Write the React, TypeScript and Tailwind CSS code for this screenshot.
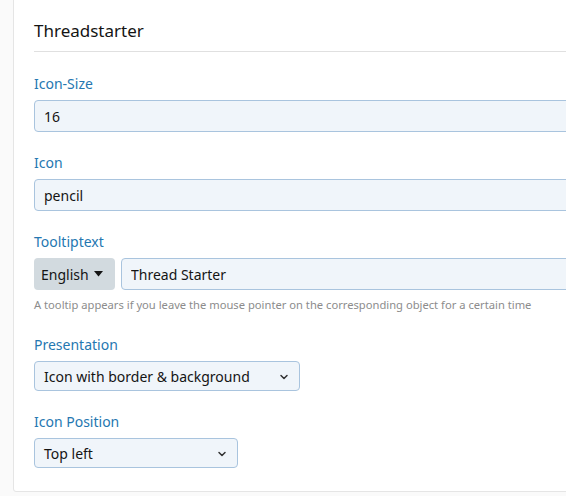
import { ChevronDown } from 'lucide-react';

const labelCls = 'block text-[14px] leading-[18px] text-[#2577b1] mb-[7px]';
const inputCls =
  'h-[32px] w-full rounded-[4px] border border-[#a9c4de] bg-[#f0f5fa] px-[9px] text-[14px] text-[#141414] outline-none';

const Field = ({ label, children }: { label: string; children: React.ReactNode }) => (
  <div className="mb-[22px]">
    <label className={labelCls}>{label}</label>
    {children}
  </div>
);

const Select = ({ value, width }: { value: string; width: string }) => (
  <div className={`${width} relative flex h-[30px] items-center rounded-[4px] border border-[#a9c4de] bg-[#f0f5fa] px-[9px] text-[14px] text-[#141414]`}>
    <span>{value}</span>
    <ChevronDown className="absolute right-[9px] top-[9px] h-[12px] w-[12px] text-[#333]" strokeWidth={3} />
  </div>
);

export default function App() {
  return (
    <div
      className="min-h-[496px] overflow-hidden bg-[#fafafa] pl-[13px]"
      style={{ fontFamily: '"Noto Sans", "Open Sans", sans-serif' }}
    >
      <div className="-mt-[4px] w-[600px] rounded-[3px] border border-[#e5e5e5] bg-white pl-[20px] pt-[22px] pb-[1px]">
        <h3 className="border-b border-[#e0e0e0] pb-[8px] text-[17px] leading-[24px] text-[#141414]">Threadstarter</h3>

        <div className="pt-[23px]">
          <Field label="Icon-Size">
            <input className={inputCls} defaultValue="16" />
          </Field>

          <Field label="Icon">
            <input className={inputCls} defaultValue="pencil" />
          </Field>

          <div className="mb-[23px]">
            <label className={labelCls}>Tooltiptext</label>
            <div className="flex gap-[6px]">
              <button className="flex h-[32px] w-[81px] shrink-0 items-center gap-[5px] rounded-[4px] bg-[#d2dadf] px-[7px] text-[14px] text-[#141414]">
                English
                <svg width="9" height="6" viewBox="0 0 9 6">
                  <path d="M0 0h9L4.5 5.5z" fill="#141414" />
                </svg>
              </button>
              <input className={inputCls} defaultValue="Thread Starter" />
            </div>
            <p className="mt-[7px] text-[11.2px] leading-[16px] text-[#8c8c8c]">
              A tooltip appears if you leave the mouse pointer on the corresponding object for a certain time
            </p>
          </div>

          <Field label="Presentation">
            <Select value="Icon with border & background" width="w-[266px]" />
          </Field>

          <Field label="Icon Position">
            <Select value="Top left" width="w-[204px]" />
          </Field>
        </div>
      </div>
    </div>
  );
}
